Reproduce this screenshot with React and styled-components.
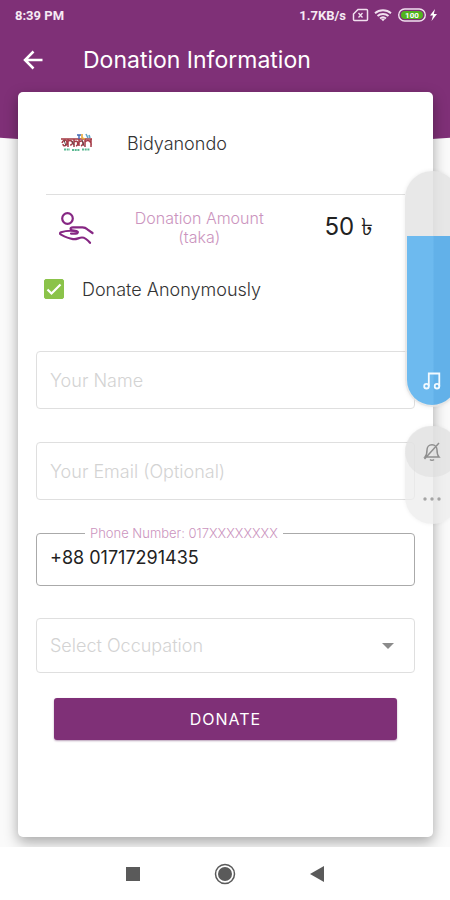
import React, { useState } from "react";
import styled, { createGlobalStyle, css } from "styled-components";

const purple = "#7f3077";
const pink = "#cb94be";

const GlobalStyle = createGlobalStyle`
  * {
    box-sizing: border-box;
  }
  body {
    margin: 0;
    background: #ffffff;
    font-family: Inter, Roboto, "Noto Sans", sans-serif;
    color: #333333;
  }
  button, input, select {
    font: inherit;
    color: inherit;
  }
`;

const occupations = ["Student", "Service", "Business", "Other"];

const Logo = () => (
  <svg width="34" height="20" viewBox="0 0 34 20" fill="none" aria-hidden="true">
    <path d="M1 6h31" stroke="#a8434c" strokeWidth="1.6" />
    <path
      d="M2 10c2-5 5-3 5 0s-4 4-4 1M8 6v8M8 8c5-2 6 4 2 4M14 6v8M14 9c4-3 5 3 2 4M19 6v7M19 9c4-3 6 2 2 4M25 6v8M25 9c3-3 7-1 6 4M31 6v8"
      stroke="#a53b47"
      strokeWidth="1.5"
    />
    <path d="M4 7l2 6M12 8l2 4M22 7l2 6" stroke="#5d4a4a" />
    <path d="M17 2h4M19 2v4" stroke="#4267b5" strokeWidth="1.4" />
    <path d="M22 1v4l3 1" stroke="#e6a83a" strokeWidth="1.6" />
    <path d="M26 1l2 4M29 2l1 3" stroke="#63a5c9" strokeWidth="1.6" />
    <path d="M4 16.500h6M12 17h8M22 16.500h8" stroke="#59b891" strokeWidth="1.8" strokeDasharray="2 .7" />
  </svg>
);

const HandIcon = () => (
  <svg width="36" height="34" viewBox="0 0 36 34" fill="none" stroke="#862783" strokeWidth="2.2" strokeLinecap="round" strokeLinejoin="round" aria-hidden="true">
    <circle cx="9.500" cy="7.500" r="5.300" />
    <path d="M13 19c-1-1.600 0-2.700 2-2.700h9.500c2 0 3.500.7 4.800 2L34.500 22" />
    <path d="M13 19l5.500 1c2.200.5 1.500 2.600-.5 2.600h-5M19 20.500c-4.500-1-10.500-1-16 .8-1.300.5-1.300 1.600 0 2.300 4 2.200 7 3.800 12 4.500 4 .6 5.500-1.600 9-1.600 3.500 0 5.500 2.300 8 5.300" />
  </svg>
);

const NoteIcon = () => (
  <svg width="18" height="18" viewBox="0 0 18 18" fill="none" stroke="#f3faff" strokeWidth="1.800" aria-hidden="true">
    <circle cx="3.500" cy="14.200" r="2.300" />
    <circle cx="14" cy="14.200" r="2.300" />
    <path d="M5.800 14.200V1.500h10.500v12.700" />
  </svg>
);

const BellOffIcon = () => (
  <svg width="20" height="20" viewBox="0 0 20 20" fill="none" stroke="#8f8f8f" strokeWidth="1.500" aria-hidden="true">
    <path d="M3 15h14c-1.600-1.700-2-3.500-2-7 0-3-2-5.200-5-5.200S5 5 5 8c0 3.500-.4 5.300-2 7zM8 17.500c1 1 3 1 4 0M17 1L2.500 17" />
  </svg>
);

const StatusIcons = () => (
  <svg width="88" height="16" viewBox="0 0 88 16" fill="none" aria-hidden="true">
    <path d="M6 2.500h8.500a1 1 0 0 1 1 1v9a1 1 0 0 1-1 1h-12a1 1 0 0 1-1-1V7z" stroke="#f1e0ef" strokeWidth="1.500" />
    <path d="M6.500 6l4 4.500M10.500 6l-4 4.500" stroke="#f1e0ef" strokeWidth="1.300" />
    <path d="M23 6.200c4.500-4 11.500-4 16 0M25.500 9c3-2.700 8-2.700 11 0M28 11.500c1.800-1.600 4.200-1.600 6 0" stroke="#f1e0ef" strokeWidth="1.900" />
    <path d="M29 12l2 2.200 2-2.200c-1-.8-3-.8-4 0z" fill="#f1e0ef" />
    <rect x="46.700" y="2" width="26.600" height="12" rx="6" fill={purple} stroke="#f1e0ef" strokeWidth="1.400" />
    <rect x="49" y="4" width="22" height="8" rx="4" fill="#51b41f" />
    <text x="60" y="11" textAnchor="middle" fontSize="8" fontWeight="700" fill="#ffffff">100</text>
    <path d="M83 2l-5 6.500h3L79.500 14l5.500-7h-3.200z" fill="#ffffff" />
  </svg>
);

const Screen = styled.div`
  position: relative;
  display: flex;
  flex-direction: column;
  min-height: 100vh;
  overflow: hidden;
`;

const Header = styled.header`
  height: 146px;
  background: ${purple};
  color: #ffffff;
  clip-path: ellipse(150% 100% at 50% 0);
`;

const StatusBar = styled.div`
  display: flex;
  align-items: center;
  gap: 6px;
  height: 30px;
  padding: 0 10px 0 15px;
  font-family: Roboto, sans-serif;
  font-size: 13px;
  font-weight: 700;
  color: #f6eaf4;
`;

const Clock = styled.span`
  flex: 1;
`;

const AppBar = styled.div`
  display: flex;
  align-items: center;
  gap: 38px;
  height: 60px;
  padding: 0 20px;
`;

const Title = styled.h1`
  margin: 0;
  font-size: 23px;
  font-weight: 400;
`;

const plainButton = css`
  display: grid;
  place-items: center;
  padding: 0;
  border: 0;
  background: none;
`;

const BackButton = styled.button`
  ${plainButton}
  width: 25px;
  height: 25px;
`;

const Main = styled.main`
  flex: 1;
  display: flex;
  flex-direction: column;
  margin-top: -146px;
  padding: 92px 17px 10px 18px;
  overflow: hidden;
`;

const Backdrop = styled.div`
  flex: 1;
  display: flex;
  flex-direction: column;
  background: #fafafa;
`;

const Card = styled.form`
  position: relative;
  flex: 1;
  padding: 0 18px 32px;
  border-radius: 5px;
  background: #ffffff;
  box-shadow: 0 5px 14px rgba(0, 0, 0, 0.34);
`;

const Charity = styled.div`
  display: flex;
  align-items: center;
  gap: 33px;
  height: 103px;
  margin: 0 10px;
  padding-left: 14px;
  border-bottom: 1px solid #dfdfdf;
  font-size: 18px;
  font-weight: 300;
`;

const Amount = styled.div`
  display: flex;
  align-items: center;
  height: 66px;
  padding: 0 42px 0 22px;
`;

const AmountLabel = styled.div`
  flex: 1;
  padding: 0 20px 0 0;
  text-align: center;
  font-size: 16px;
  line-height: 19px;
  font-weight: 300;
  color: ${pink};
`;

const AmountValue = styled.div`
  font-size: 24px;
  color: #222222;
`;

const Anonymous = styled.label`
  display: flex;
  align-items: center;
  gap: 18px;
  height: 56px;
  padding-left: 8px;
  font-size: 18px;
  font-weight: 300;
`;

const CheckBox = styled.span`
  display: grid;

  > svg {
    pointer-events: none;
  }
  > * {
    grid-area: 1 / 1;
  }
`;

const Tick = styled.input`
  appearance: none;
  width: 20px;
  height: 20px;
  margin: 0;
  border: 1px solid #8bc34a;
  border-radius: 2px;

  &:checked {
    background: #8bc34a;
  }
`;

const Fields = styled.div`
  display: flex;
  flex-direction: column;
  gap: 33px;
  margin-top: 34px;
`;

const fieldStyle = css`
  width: 100%;
  padding: 0 13px;
  border: 1px solid #dfdfdf;
  border-radius: 4px;
  background: none;
  font-size: 18px;
  font-weight: 300;
`;

const TextField = styled.input`
  ${fieldStyle}
  height: 58px;

  &::placeholder {
    color: #d3d3d3;
    opacity: 1;
  }
`;

const Outline = styled.fieldset`
  min-width: 0;
  height: 62px;
  margin: -9px 0 -1px;
  padding: 0;
  border: 1px solid #aaaaaa;
  border-radius: 4px;

  legend {
    height: 18px;
    margin-left: 48px;
    padding: 0 5px;
    font-size: 13px;
    line-height: 18px;
    font-weight: 300;
    color: ${pink};
  }
`;

const PhoneInput = styled.input`
  width: 100%;
  height: 30px;
  padding: 0 13px;
  border: 0;
  background: none;
  font-size: 18px;
  color: #222222;
`;

const SelectWrap = styled.div`
  display: grid;
  align-items: center;

  > * {
    grid-area: 1 / 1;
  }
  svg {
    justify-self: end;
    margin-right: 21px;
    pointer-events: none;
  }
`;

const Select = styled.select`
  ${fieldStyle}
  appearance: none;
  height: 55px;
  color: ${props => (props.$empty ? "#d3d3d3" : "#333333")};
`;

const DonateButton = styled.button`
  display: block;
  width: calc(100% - 36px);
  height: 42px;
  margin: 25px auto 0;
  border: 0;
  border-radius: 3px;
  background: ${purple};
  box-shadow: 0 1px 2px rgba(80, 20, 80, 0.4);
  color: #ffffff;
  font-size: 16px;
  letter-spacing: 1px;
`;

const NavBar = styled.nav`
  position: relative;
  display: flex;
  justify-content: center;
  gap: 68px;
  height: 53px;
  background: #ffffff;
`;

const NavButton = styled.button`
  ${plainButton}
  width: 24px;
  height: 53px;
`;

// System volume panel, sticks out past the right edge of the screen
const VolumePanel = styled.aside`
  position: absolute;
  top: 171px;
  right: -9px;
  width: 54px;
`;

const Volume = styled.label`
  position: relative;
  display: flex;
  flex-direction: column;
  justify-content: flex-end;
  height: 236px;
  padding: 2px;
  border-radius: 27px;
  overflow: hidden;
  background: rgba(226, 226, 226, 0.8);
  box-shadow: 0 0 4px rgba(0, 0, 0, 0.08);

  input {
    position: absolute;
    inset: 0;
    width: 100%;
    height: 100%;
    margin: 0;
    opacity: 0;
    writing-mode: vertical-lr;
    direction: rtl;
  }
`;

const VolumeFill = styled.span`
  display: flex;
  align-items: flex-end;
  justify-content: center;
  padding-bottom: 15px;
  border-radius: 0 0 25px 25px;
  background: linear-gradient(90deg, #6dbaef 26px, #62b1e9 27px);
`;

const PanelActions = styled.div`
  display: flex;
  flex-direction: column;
  height: 98px;
  margin-top: 19px;
  padding-bottom: 4px;
  border-radius: 27px;
  background: rgba(236, 236, 236, 0.75);
  box-shadow: 0 0 4px rgba(0, 0, 0, 0.06);
`;

const PanelButton = styled.button`
  ${plainButton}
  flex: ${props => (props.$round ? "0 0 51px" : "1")};
  border-radius: 26px;
  background: ${props => (props.$round ? "rgba(215, 215, 215, 0.4)" : "none")};
`;

const App = () => {
  const [anonymous, setAnonymous] = useState(true);
  const [phone, setPhone] = useState("+88 01717291435");
  const [occupation, setOccupation] = useState("");
  const [volume, setVolume] = useState(73);

  return (
    <Screen>
      <GlobalStyle />
      <Backdrop>
        <Header>
          <StatusBar>
            <Clock>8:39 PM</Clock>
            <span>1.7KB/s</span>
            <StatusIcons />
          </StatusBar>
          <AppBar>
            <BackButton type="button" aria-label="Back">
              <svg width="24" height="24" viewBox="0 0 24 24" fill="none" stroke="#ffffff" strokeWidth="2.500">
                <path d="M21.500 12H4M12.500 3.500L4 12l8.500 8.500" />
              </svg>
            </BackButton>
            <Title>Donation Information</Title>
          </AppBar>
        </Header>

        <Main>
          <Card onSubmit={e => e.preventDefault()}>
            <Charity>
              <Logo />
              Bidyanondo
            </Charity>
            <Amount>
              <HandIcon />
              <AmountLabel>
                Donation Amount
                <br />
                (taka)
              </AmountLabel>
              <AmountValue>50 ৳</AmountValue>
            </Amount>
            <Anonymous>
              <CheckBox>
                <Tick
                  type="checkbox"
                  checked={anonymous}
                  onChange={e => setAnonymous(e.target.checked)}
                />
                <svg width="20" height="20" viewBox="0 0 20 20" fill="none" stroke="#ffffff" strokeWidth="2.200">
                  <path d="M3.500 10.500l4 4L16.500 5.500" />
                </svg>
              </CheckBox>
              Donate Anonymously
            </Anonymous>

            <Fields>
              <TextField aria-label="Your Name" placeholder="Your Name" />
              <TextField
                type="email"
                aria-label="Your Email (Optional)"
                placeholder="Your Email (Optional)"
              />
              <Outline>
                <legend>
                  <label htmlFor="phone">Phone Number: 017XXXXXXXX</label>
                </legend>
                <PhoneInput
                  id="phone"
                  type="tel"
                  value={phone}
                  onChange={e => setPhone(e.target.value)}
                />
              </Outline>
              <SelectWrap>
                <Select
                  aria-label="Select Occupation"
                  value={occupation}
                  $empty={!occupation}
                  onChange={e => setOccupation(e.target.value)}
                >
                  <option value="">Select Occupation</option>
                  {occupations.map(name => (
                    <option key={name}>{name}</option>
                  ))}
                </Select>
                <svg width="12" height="6" viewBox="0 0 12 6">
                  <path d="M0 0h12L6 6z" fill="#8b8b8b" />
                </svg>
              </SelectWrap>
            </Fields>
            <DonateButton type="submit">DONATE</DonateButton>
          </Card>
        </Main>
      </Backdrop>

      <NavBar>
        <NavButton type="button" aria-label="Recent apps">
          <svg width="14" height="14" viewBox="0 0 14 14">
            <path d="M0 0h14v14H0z" fill="#5a5a5a" />
          </svg>
        </NavButton>
        <NavButton type="button" aria-label="Home">
          <svg width="22" height="22" viewBox="0 0 22 22">
            <circle cx="11" cy="11" r="9.500" fill="none" stroke="#5a5a5a" strokeWidth="1.500" />
            <circle cx="11" cy="11" r="7" fill="#5a5a5a" />
          </svg>
        </NavButton>
        <NavButton type="button" aria-label="Back">
          <svg width="14" height="16" viewBox="0 0 14 16">
            <path d="M14 0v16L0 8z" fill="#5a5a5a" />
          </svg>
        </NavButton>
      </NavBar>

      <VolumePanel>
        <Volume>
          <VolumeFill style={{ height: `${volume}%` }}>
            <NoteIcon />
          </VolumeFill>
          <input
            type="range"
            aria-label="Media volume"
            value={volume}
            onChange={e => setVolume(Number(e.target.value))}
          />
        </Volume>
        <PanelActions>
          <PanelButton type="button" $round aria-label="Silent mode">
            <BellOffIcon />
          </PanelButton>
          <PanelButton type="button" aria-label="More">
            <svg width="18" height="4" viewBox="0 0 18 4" fill="#a5a5a5">
              <circle cx="2" cy="2" r="1.700" />
              <circle cx="9" cy="2" r="1.700" />
              <circle cx="16" cy="2" r="1.700" />
            </svg>
          </PanelButton>
        </PanelActions>
      </VolumePanel>
    </Screen>
  );
};

export default App;
